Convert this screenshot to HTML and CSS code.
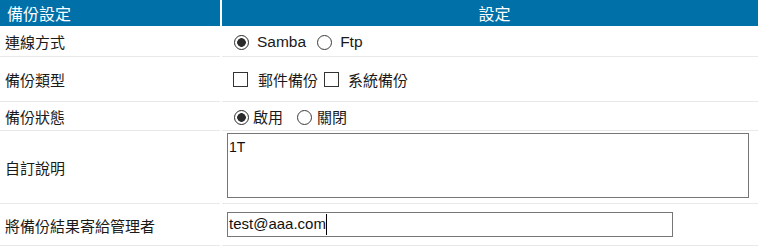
FILE: index.html
```html
<!DOCTYPE html>
<html lang="zh-Hant">
<head>
<meta charset="utf-8">
<title>備份設定</title>
<link rel="stylesheet" href="styles.css">
</head>
<body>
<table class="form">
  <thead>
    <tr class="head">
      <th class="h-left">備份設定</th>
      <th class="h-right">設定</th>
    </tr>
  </thead>
  <tbody>
    <tr class="r-conn">
      <td class="label">連線方式</td>
      <td class="field">
        <div class="opts">
          <input type="radio" name="conn" class="rb rb-1" checked><span class="lt lt-samba">Samba</span>
          <input type="radio" name="conn" class="rb rb-2"><span class="lt lt-ftp">Ftp</span>
        </div>
      </td>
    </tr>
    <tr class="r-type">
      <td class="label">備份類型</td>
      <td class="field">
        <div class="opts">
          <input type="checkbox" class="cb cb-1"><span class="ct ct-1">郵件備份</span>
          <input type="checkbox" class="cb cb-2"><span class="ct ct-2">系統備份</span>
        </div>
      </td>
    </tr>
    <tr class="r-state">
      <td class="label">備份狀態</td>
      <td class="field">
        <div class="opts">
          <input type="radio" name="state" class="rb rb-s1" checked><span class="st st-1">啟用</span>
          <input type="radio" name="state" class="rb rb-s2"><span class="st st-2">關閉</span>
        </div>
      </td>
    </tr>
    <tr class="r-desc">
      <td class="label">自訂說明</td>
      <td class="field">
        <textarea class="desc">1T</textarea>
      </td>
    </tr>
    <tr class="r-mail">
      <td class="label">將備份結果寄給管理者</td>
      <td class="field">
        <div class="mail" role="textbox"><span class="mail-text">test@aaa.com</span><span class="caret"></span></div>
      </td>
    </tr>
  </tbody>
</table>
</body>
</html>
```

FILE: styles.css
```css
html, body {
  margin: 0;
  padding: 0;
  background: #ffffff;
}

body {
  font-family: "Liberation Sans", "Noto Sans CJK TC", sans-serif;
  color: #1a1a1a;
  overflow: hidden;
}

.form {
  border-collapse: separate;
  border-spacing: 2px;
  margin: -2px;
  width: calc(100% + 4px);
  table-layout: fixed;
}

.form th,
.form td {
  box-sizing: border-box;
}

.form th {
  background: #0070a8;
  color: #ffffff;
  font-family: "Noto Sans CJK TC", sans-serif;
  font-weight: normal;
  font-size: 16px;
  line-height: 20px;
  height: 26px;
  padding: 0;
}

.h-left {
  width: 220px;
  text-align: left;
  padding-left: 7px !important;
}

.h-right {
  text-align: center;
  padding-left: 9px !important;
}

.form td {
  border-bottom: 1px solid #e9e9e9;
  vertical-align: middle;
  padding: 0;
}

.label {
  font-family: "Noto Sans CJK TC", sans-serif;
  font-size: 15px;
  line-height: 20px;
  padding-left: 5px !important;
  color: #1a1a1a;
}

.field {
  padding-left: 5px !important;
}

.r-conn { height: 29px; }
.r-type { height: 43px; }
.r-state { height: 27px; }
.r-desc { height: 71px; }
.r-mail { height: 40px; }

.opts {
  display: flex;
  align-items: center;
  font-size: 15px;
  line-height: 20px;
}

.lt {
  font-family: "Liberation Sans", sans-serif;
  font-size: 15.5px;
}

.ct, .st {
  font-family: "Noto Sans CJK TC", sans-serif;
}

.rb {
  appearance: none;
  -webkit-appearance: none;
  width: 15px;
  height: 15px;
  margin: 0;
  border: 1px solid #3a3a3a;
  border-radius: 50%;
  background: #ffffff;
  flex: none;
  box-sizing: border-box;
}

.rb:checked {
  border: 1.5px solid #2a2a2a;
  background: radial-gradient(circle, #2b2b2b 0, #2b2b2b 4px, #ffffff 4.6px);
}

.cb {
  appearance: none;
  -webkit-appearance: none;
  width: 15px;
  height: 15px;
  margin: 0;
  border: 1px solid #333333;
  border-radius: 0;
  background: #ffffff;
  flex: none;
  box-sizing: border-box;
}

.rb-1 { margin-left: 7px; }
.lt-samba { margin-left: 8px; }
.rb-2 { margin-left: 11px; }
.lt-ftp { margin-left: 8px; }

.cb-1 { margin-left: 6px; margin-top: -2px; }
.ct-1 { margin-left: 10px; }
.cb-2 { margin-left: 6px; margin-top: -2px; }
.ct-2 { margin-left: 9px; }

.rb-s1 { margin-left: 7px; }
.st-1 { margin-left: 4px; }
.rb-s2 { margin-left: 14px; }
.st-2 { margin-left: 5px; }

.desc {
  display: block;
  box-sizing: border-box;
  width: 522px;
  height: 65px;
  margin: 0 0 5px 0;
  border: 1px solid #767676;
  border-radius: 0;
  padding: 5px 1px;
  font-family: "Liberation Sans", sans-serif;
  font-size: 14px;
  line-height: 16px;
  color: #111111;
  resize: none;
  outline: none;
}

.mail {
  display: flex;
  align-items: center;
  box-sizing: border-box;
  width: 446px;
  height: 25px;
  margin: 0 0 3px 0;
  border: 1px solid #767676;
  padding: 0 1px;
  font-family: "Liberation Sans", sans-serif;
  font-size: 15px;
  line-height: 20px;
  color: #111111;
}

.caret {
  display: inline-block;
  width: 1px;
  height: 21px;
  background: #000000;
}
```
